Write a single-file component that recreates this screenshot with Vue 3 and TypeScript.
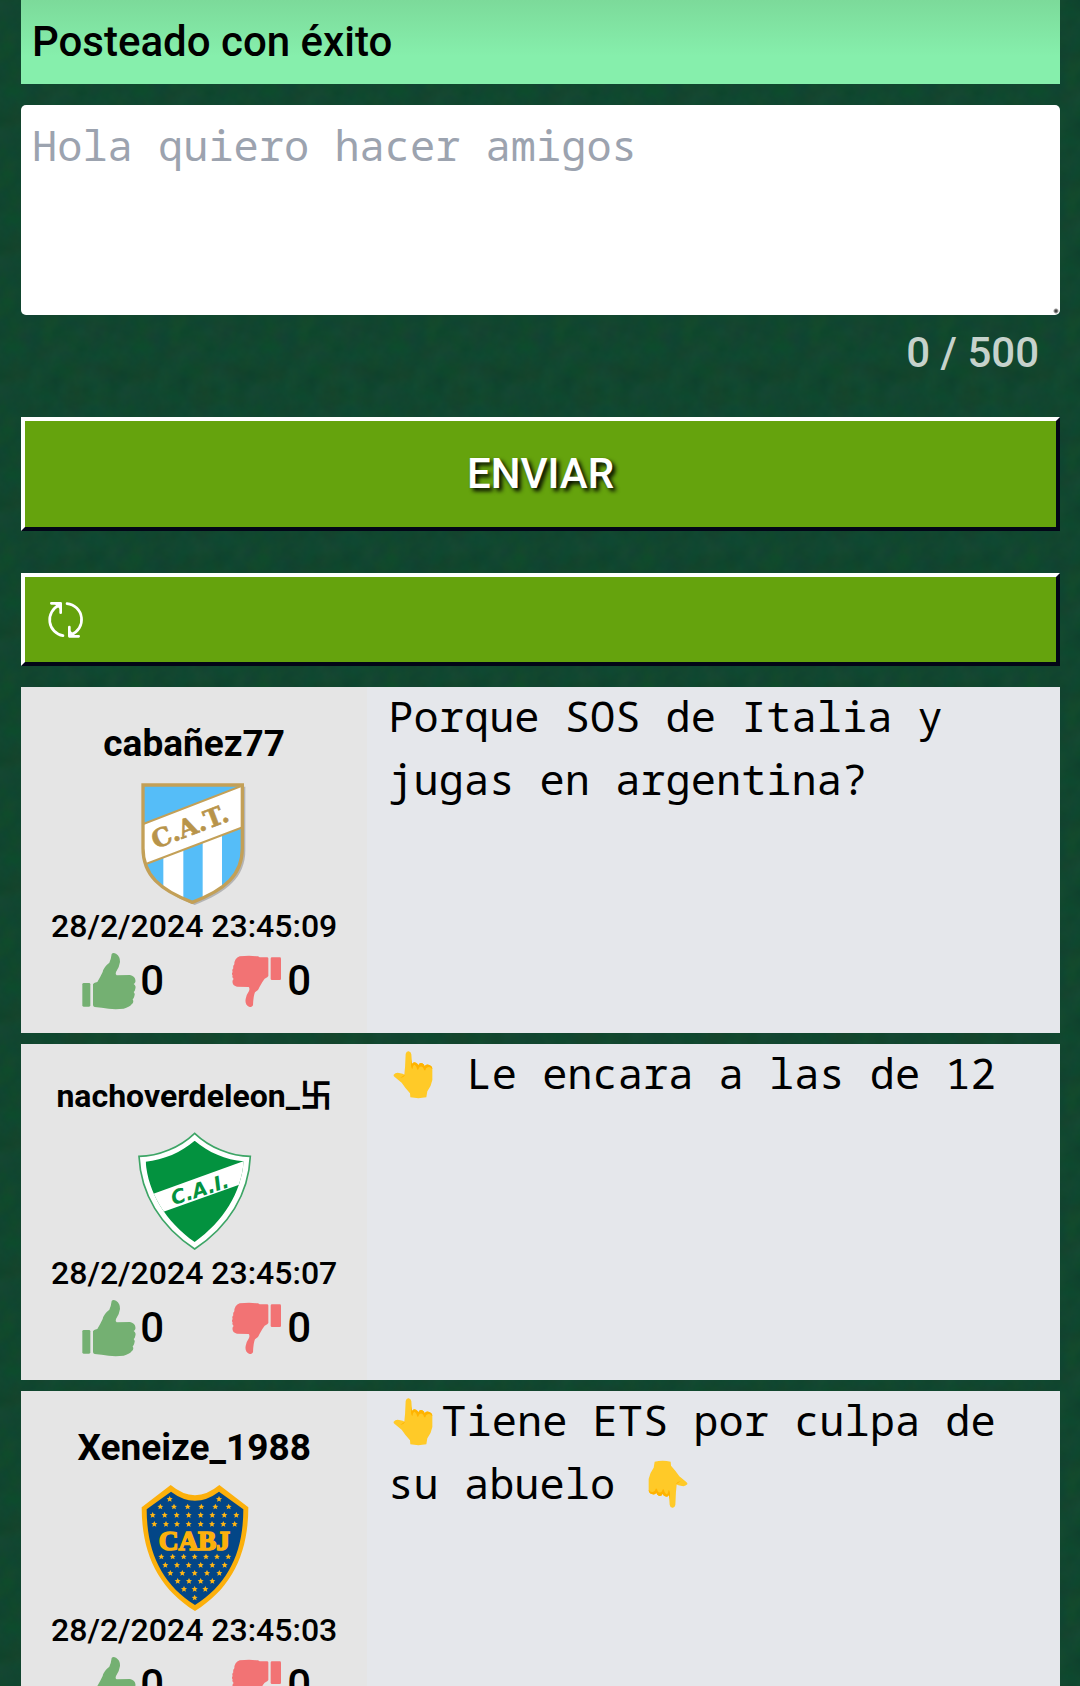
<script setup lang="ts">
import { ref } from 'vue'

type Crest = 'tucuman' | 'ituzaingo' | 'boca'
type Part = { kind: 'text'; value: string } | { kind: 'up' } | { kind: 'down' }

interface Post {
  id: number
  user: string
  long: boolean
  crest: Crest
  date: string
  likes: number
  dislikes: number
  body: Part[]
}

const message = ref('')
const maxLength = 500

const posts = ref<Post[]>([
  {
    id: 1,
    user: 'cabañez77',
    long: false,
    crest: 'tucuman',
    date: '28/2/2024 23:45:09',
    likes: 0,
    dislikes: 0,
    body: [{ kind: 'text', value: 'Porque SOS de Italia y jugas en argentina?' }],
  },
  {
    id: 2,
    user: 'nachoverdeleon_卐',
    long: true,
    crest: 'ituzaingo',
    date: '28/2/2024 23:45:07',
    likes: 0,
    dislikes: 0,
    body: [{ kind: 'up' }, { kind: 'text', value: ' Le encara a las de 12' }],
  },
  {
    id: 3,
    user: 'Xeneize_1988',
    long: false,
    crest: 'boca',
    date: '28/2/2024 23:45:03',
    likes: 0,
    dislikes: 0,
    body: [
      { kind: 'up' },
      { kind: 'text', value: 'Tiene ETS por culpa de su abuelo ' },
      { kind: 'down' },
    ],
  },
])

// Rows of stars on the Boca crest: vertical position and the columns in each row
const starRows: { y: number; xs: number[] }[] = [
  { y: 72, xs: [149, 297] },
  { y: 95, xs: [121, 162, 203, 244, 286, 326] },
  { y: 120, xs: [98, 134, 170, 206, 242, 277, 313, 349] },
  { y: 147, xs: [103, 138, 171, 206, 242, 276, 310, 344] },
  { y: 245, xs: [124, 158, 191, 224, 258, 291, 325] },
  { y: 270, xs: [136, 171, 206, 242, 277, 314] },
  { y: 294, xs: [151, 187, 224, 261, 298] },
  { y: 318, xs: [173, 207, 242, 277] },
  { y: 342, xs: [192, 224, 256] },
  { y: 368, xs: [224] },
]
const stars = starRows.flatMap((row) => row.xs.map((x) => ({ x, y: row.y })))
</script>

<template>
  <main class="page">
    <p class="notice" role="status">Posteado con éxito</p>

    <form class="composer" @submit.prevent>
      <textarea
        v-model="message"
        class="field"
        aria-label="Mensaje"
        placeholder="Hola quiero hacer amigos"
        :maxlength="maxLength"
      ></textarea>
      <p class="counter">{{ message.length }} / {{ maxLength }}</p>
      <button class="btn send" type="submit">ENVIAR</button>
    </form>

    <button class="btn refresh" type="button" aria-label="Actualizar">
      <svg class="refresh-icon" viewBox="138 599 120 120" aria-hidden="true">
        <g fill="none" stroke="#fff" stroke-width="8" stroke-linecap="round" stroke-linejoin="round">
          <path d="M192 706A48 48 0 0 1 180 615" />
          <path d="M204 610A48 48 0 0 1 216 703" />
          <path d="M157 609H185V637" />
          <path d="M239 708H211V680" />
        </g>
        <path d="M165 609H186V630ZM210 687V709H232Z" fill="#fff" />
      </svg>
    </button>

    <section class="posts">
      <article v-for="post in posts" :key="post.id" class="post">
        <div class="author">
          <h2 class="user" :class="{ long: post.long }">{{ post.user }}</h2>

          <svg v-if="post.crest === 'tucuman'" class="crest" viewBox="33 33 378 378" aria-hidden="true">
            <defs>
              <clipPath id="cat-shape">
                <path d="M69 45H367V235C367 315 315 360 217 397C119 360 69 315 69 235Z" />
              </clipPath>
            </defs>
            <path d="M75 50H376V240C376 322 322 366 224 405C126 366 75 322 75 240Z" fill="#777" opacity=".45" />
            <g clip-path="url(#cat-shape)">
              <path d="M60 40H380V410H60Z" fill="#55bdf8" />
              <path d="M130 200H190V410H130ZM248 180H306V410H248Z" fill="#fff" />
              <path d="M60 166L375 44V169L60 289Z" fill="#fff" stroke="#c3a057" stroke-width="6" />
            </g>
            <path d="M69 45H367V235C367 315 315 360 217 397C119 360 69 315 69 235Z" fill="none" stroke="#c3a057" stroke-width="10" />
            <text class="crest-serif" transform="translate(219 194) rotate(-21)" font-size="75" fill="#b8944a" stroke="#b8944a" stroke-width="2">C.A.T.</text>
          </svg>

          <svg v-else-if="post.crest === 'ituzaingo'" class="crest" viewBox="33 24 378 378" aria-hidden="true">
            <defs>
              <clipPath id="cai-shape">
                <path d="M224 62C185 96 130 120 77 125C84 218 138 305 224 366C310 305 364 218 371 124C318 120 263 96 224 62Z" />
              </clipPath>
            </defs>
            <path d="M224 40C180 82 116 109 57 109C62 222 122 320 224 387C326 320 386 222 391 109C332 109 268 82 224 40Z" fill="#fff" stroke="#3da566" stroke-width="5" />
            <g clip-path="url(#cai-shape)">
              <path d="M50 40H400V400H50Z" fill="#03923f" />
              <path d="M90 225L385 118V184L120 279Z" fill="#fff" />
            </g>
            <text class="crest-sans" transform="translate(246 228) rotate(-18)" font-size="59" fill="#03923f">C.A.I.</text>
          </svg>

          <svg v-else class="crest" viewBox="33 30 378 378" aria-hidden="true">
            <defs>
              <path id="star" d="M0-9L3-3L9-2L4 2L6 8L0 5L-6 8L-4 2L-9-2L-3-3Z" fill="#fdb515" />
            </defs>
            <path d="M152 30Q225 91 298 30L385 97C385 235 335 340 225 408C115 340 65 235 65 97Z" fill="#fcb00c" />
            <path d="M153 50Q225 104 297 50L370 103C370 232 324 328 225 390C126 328 80 232 80 103Z" fill="#034687" />
            <use v-for="(s, i) in stars" :key="i" href="#star" :x="s.x" :y="s.y" />
            <text class="crest-block" transform="translate(223 224)" font-size="82" fill="#fcb00c" stroke="#fcb00c" stroke-width="5">CABJ</text>
          </svg>

          <time class="date">{{ post.date }}</time>

          <div class="votes">
            <button class="vote" type="button" aria-label="Me gusta">
              <svg class="thumb" viewBox="171 807 189 189" aria-hidden="true">
                <g fill="#74b072">
                  <rect x="187" y="909" width="24" height="71" rx="4" />
                  <path d="M219 913Q220 909 232 906Q240 893 248 876Q251 861 268 848Q273 838 275 822Q279 816 288 821Q301 829 300 846Q298 862 288 876Q285 884 290 886L330 885Q344 888 346 899Q348 908 341 912Q349 918 346 926Q345 933 341 936Q347 942 343 949Q341 956 338 958Q343 967 335 973Q328 982 311 986Q278 990 245 983L224 981Q219 980 219 975Z" />
                </g>
              </svg>
              <span>{{ post.likes }}</span>
            </button>
            <button class="vote" type="button" aria-label="No me gusta">
              <svg class="thumb" viewBox="612 807 189 189" aria-hidden="true">
                <g fill="#f27374">
                  <rect x="752" y="832" width="31" height="68" rx="4" />
                  <path d="M745 835V888Q744 892 734 896Q726 906 719 920Q717 929 705 937Q700 948 699 976Q695 984 687 980Q674 973 677 957Q678 946 687 933Q690 925 686 921L651 920Q639 917 638 909Q636 901 641 897Q635 892 638 887Q634 881 638 876Q635 870 640 865Q638 858 643 853Q643 835 659 829Q688 826 714 829L719 832H741Q745 832 745 835Z" />
                </g>
              </svg>
              <span>{{ post.dislikes }}</span>
            </button>
          </div>
        </div>

        <p class="body"><template v-for="(part, i) in post.body" :key="i"><template v-if="part.kind === 'text'">{{ part.value }}</template><svg v-else class="hand" :class="{ flipped: part.kind === 'down' }" viewBox="57 54 159 159" role="img" :aria-label="part.kind === 'up' ? '👆' : '👇'"><path d="M110 72Q112 63 119 64Q126 65 127 73L129 102Q133 94 141 98Q147 101 148 106Q152 96 160 100Q166 103 167 109Q171 101 181 105Q190 108 190 118L190 150Q187 168 175 184L172 202Q148 207 124 202L123 190Q110 176 98 158L78 142Q72 137 74 134Q80 127 90 129Q103 131 107 134Z" fill="#ffca28" /><path d="M127 88L129 102Q133 94 141 98Q147 101 148 106Q152 96 160 100Q166 103 167 109Q171 101 181 105Q190 108 190 118Q183 108 176 112Q170 114 169 121Q165 123 163 114Q158 105 150 113Q149 120 145 119Q143 108 137 104Q131 105 131 116Q127 118 126 106ZM107 112L108 135Q104 143 94 144Q101 138 107 134Z" fill="#ffb300" /></svg></template></p>
      </article>
    </section>
  </main>
</template>

<style>
body {
  margin: 0;
  background: #11462f;
}
</style>

<style scoped>
.page {
  box-sizing: border-box;
  height: 100vh;
  overflow-y: auto;
  scrollbar-width: none;
  padding: 0 20px 0 21px;
  color: #000;
  font-family: Roboto, "Noto Sans CJK SC", sans-serif;
  font-size: 42px;
  font-weight: 500;
  line-height: 63px;
  background-color: #11462f;
  background-image: url("data:image/svg+xml,%3Csvg xmlns='http://www.w3.org/2000/svg' width='128' height='128'%3E%3Cfilter id='n' x='0' y='0' width='100%25' height='100%25' color-interpolation-filters='sRGB'%3E%3CfeTurbulence type='fractalNoise' baseFrequency='.05' numOctaves='4' seed='4' stitchTiles='stitch'/%3E%3CfeColorMatrix values='.05 0 0 0 .042 0 .05 0 0 .25 0 0 .05 0 .158 0 0 0 0 1'/%3E%3C/filter%3E%3Crect width='128' height='128' filter='url(%23n)'/%3E%3C/svg%3E");
}

.notice {
  margin: 0 0 21px;
  padding: 10px 11px 11px;
  background: linear-gradient(#7cda9a, #86efac 56px);
}

.composer {
  display: flex;
  flex-direction: column;
  margin-bottom: 42px;
}

.field {
  box-sizing: border-box;
  width: 100%;
  height: 210px;
  margin-bottom: 6px;
  padding: 8px 11px;
  border: 0;
  border-radius: 5px;
  background: #fff;
  color: #000;
  font-family: "Noto Sans Mono", "DejaVu Sans Mono", monospace;
  font-size: 42px;
  font-weight: 400;
  line-height: 63px;
  resize: vertical;
}

.field::placeholder {
  color: #9ca3af;
  opacity: 1;
}

.field::-webkit-resizer {
  background: radial-gradient(circle at 11px 11px, #444 1px, transparent 3px);
}

.counter {
  margin: 0 0 33px;
  padding: 0 21px;
  color: #c6d2cc;
  text-align: right;
}

.btn {
  display: flex;
  align-items: center;
  width: 100%;
  border: 4px solid;
  border-color: #fff #020617 #020617 #fff;
  background: #65a30d;
  color: #fff;
  font: inherit;
}

.send {
  justify-content: center;
  padding: 21px 21px 22px;
  text-shadow: 3px 3px 4px #000;
}

.refresh {
  margin-bottom: 21px;
  padding: 23px 20px 22px;
}

.refresh-icon {
  width: 40px;
  height: 40px;
}

.posts {
  display: flex;
  flex-direction: column;
  gap: 11px;
}

.post {
  display: flex;
  background: #e5e7eb;
}

.author {
  box-sizing: border-box;
  display: flex;
  flex: 0 0 33.3333%;
  flex-direction: column;
  align-items: center;
  padding: 31px 0 21px;
  background: #e5e5e5;
}

.user {
  margin: 0 0 11px;
  font-size: 37px;
  font-weight: 700;
  line-height: 52px;
}

.user.long {
  font-size: 32px;
  line-height: 42px;
}

.crest {
  width: 126px;
  height: 126px;
}

.crest-serif {
  font-family: "DejaVu Serif", serif;
  font-weight: 700;
  text-anchor: middle;
}

.crest-block {
  font-family: "Liberation Serif", serif;
  font-weight: 700;
  text-anchor: middle;
}

.crest-sans {
  font-family: "DejaVu Sans", sans-serif;
  font-style: italic;
  font-weight: 700;
  text-anchor: middle;
}

.date {
  margin-bottom: 4px;
  font-size: 32px;
  line-height: 38px;
}

.votes {
  display: flex;
  gap: 60px;
}

.vote {
  display: flex;
  align-items: center;
  padding: 0;
  border: 0;
  background: none;
  color: inherit;
  font: inherit;
}

.thumb {
  width: 63px;
  height: 63px;
}

.body {
  flex: 1;
  min-width: 0;
  margin: -3px 0 0;
  padding: 0 21px;
  font-family: "Noto Sans Mono", "DejaVu Sans Mono", monospace;
  font-weight: 400;
  white-space: pre-wrap;
}

.hand {
  width: 53px;
  height: 53px;
  vertical-align: -12px;
}

.hand.flipped {
  transform: rotate(180deg);
}
</style>
